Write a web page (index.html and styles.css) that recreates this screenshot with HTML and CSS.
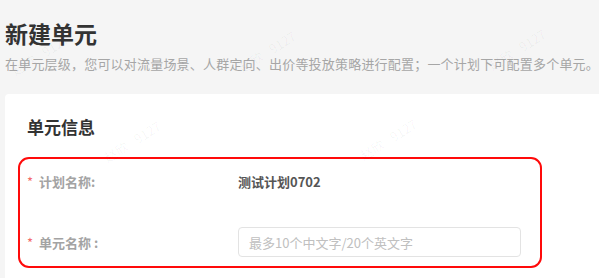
FILE: index.html
```html
<!DOCTYPE html>
<html lang="zh">
<head>
<meta charset="utf-8">
<link rel="stylesheet" href="styles.css">
</head>
<body>
<div class="page">
  <div class="head">
    <h1 class="title">新建单元</h1>
    <p class="desc">在单元层级，您可以对流量场景、人群定向、出价等投放策略进行配置；一个计划下可配置多个单元。</p>
  </div>
  <div class="card">
    <h2 class="card-title">单元信息</h2>
    <div class="mark">
      <div class="row">
        <div class="label"><span class="star">*</span>计划名称:</div>
        <div class="value">测试计划0702</div>
      </div>
      <div class="row">
        <div class="label"><span class="star">*</span>单元名称 :</div>
        <div class="field"><input class="input" type="text" placeholder="最多10个中文字/20个英文字"></div>
      </div>
    </div>
  </div>
  <div class="wm wm1">赵欣 | 9127</div>
  <div class="wm wm2">赵欣 | 9127</div>
  <div class="wm wm3">赵欣 | 9127</div>
  <div class="wm wm4">赵欣 | 9127</div>
  <div class="wm wm5">赵欣 | 9127</div>
</div>
</body>
</html>
```
FILE: styles.css
```css
html, body {
  margin: 0;
  padding: 0;
  background: #f5f5f5;
  font-family: "Noto Sans CJK SC", "Noto Sans", sans-serif;
}
.page {
  position: relative;
  width: 599px;
  height: 278px;
  overflow: hidden;
  padding-left: 5px;
  box-sizing: border-box;
}
.head {
  padding-top: 18px;
}
.title {
  margin: 0;
  font-size: 23px;
  line-height: 30px;
  font-weight: 600;
  color: #333;
}
.desc {
  margin: 7px 0 0 0;
  font-size: 13px;
  line-height: 18px;
  color: #a6a6a6;
  white-space: nowrap;
  letter-spacing: 0.2px;
}
.card {
  margin-top: 21px;
  background: #fff;
  border-radius: 4px 0 0 0;
  padding: 21px 0 0 13px;
  height: 200px;
  box-sizing: border-box;
}
.card-title {
  margin: 0 0 18px 9px;
  font-size: 17px;
  line-height: 24px;
  font-weight: 700;
  color: #333;
}
.mark {
  width: 524px;
  box-sizing: border-box;
  border: 2px solid #ff0a0a;
  border-radius: 11px;
  padding: 7px 19px 9px 7px;
  display: flex;
  flex-direction: column;
  gap: 31px;
}
.row {
  display: flex;
  align-items: center;
  height: 30px;
}
.label {
  width: 211px;
  flex: none;
  font-size: 13px;
  font-weight: 700;
  color: #a3a3a3;
}
.star {
  color: #f36b6b;
  margin-right: 6px;
  font-weight: 400;
}
.value {
  font-size: 13px;
  font-weight: 700;
  color: #555;
}
.field {
  flex: 1;
}
.input {
  display: block;
  width: 100%;
  height: 30px;
  box-sizing: border-box;
  border: 1px solid #e3e3e3;
  border-radius: 4px;
  padding: 0 10px;
  font-family: "Noto Sans CJK SC", "Noto Sans", sans-serif;
  font-size: 13px;
  outline: none;
  background: #fff;
}
.input::placeholder {
  color: #c0c0c0;
}
.wm {
  position: absolute;
  font-size: 13px;
  color: rgba(0, 0, 0, 0.04);
  transform: rotate(-32deg);
  white-space: nowrap;
  pointer-events: none;
  font-family: "Noto Sans CJK SC", sans-serif;
}
.wm1 { left: 100px; top: 132px; }
.wm2 { left: 356px; top: 130px; }
.wm3 { left: 8px; top: 45px; }
.wm4 { left: 235px; top: 42px; }
.wm5 { left: 485px; top: 40px; }
```
